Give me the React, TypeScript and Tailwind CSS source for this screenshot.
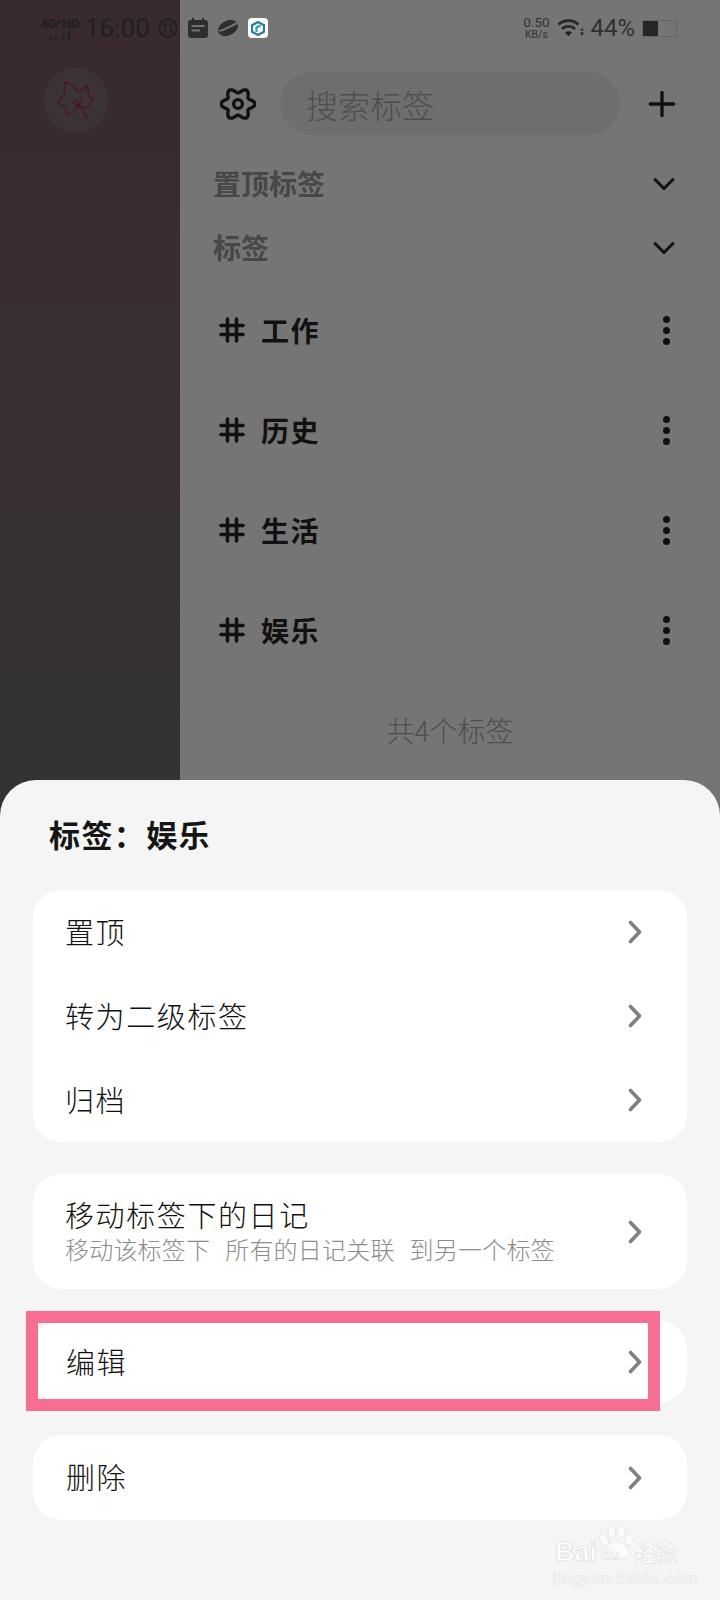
import React from 'react';
import { ChevronDown, Plus } from 'lucide-react';

const cjk = "font-['Noto_Sans_CJK_SC','Noto_Sans',sans-serif]";

const gearPath = () => {
  const pts: string[] = [];
  for (let i = 0; i < 120; i++) {
    const t = (i / 120) * Math.PI * 2;
    const r = 14.4 + 2.6 * Math.cos(6 * t);
    pts.push(`${(18 + r * Math.cos(t)).toFixed(2)} ${(18 + r * 0.94 * Math.sin(t)).toFixed(2)}`);
  }
  return `M${pts.join('L')}Z`;
};

const Gear = () => (
  <svg width="36" height="36" viewBox="0 0 36 36" fill="none" stroke="#111" strokeWidth="3.4" strokeLinejoin="round">
    <path d={gearPath()} />
    <circle cx="18" cy="18" r="4.4" />
  </svg>
);

const Leaf = () => (
  <svg width="64" height="64" viewBox="4 8 64 64" fill="none" stroke="#4a1626" strokeWidth="1.5" strokeLinejoin="round" strokeLinecap="round">
    <path d="M25 22 C30 23 35 27 38 32 C41 30 44 28 47 26 C48 30 49 34 49 37 L53 38 C52 42 48 47 45 48 C43 48 40 47 37 47 C35 51 32 54 28 55 C27 52 26 49 25 47 C23 46 20 44 18 42 C20 39 23 36 25 34 C24 30 24 26 25 22 Z" />
    <path d="M36 39 L47 58 M32 42 L39 46 M41 39 L39 45" />
  </svg>
);

const HashIcon = () => (
  <svg width="26" height="26" viewBox="0 0 26 26" stroke="#111" strokeWidth="3.6" strokeLinecap="round">
    <path d="M8.5 2V24M17.5 2V24M2 8.5H24M2 17.5H24" />
  </svg>
);

const Dots = () => (
  <div className="flex flex-col gap-[4px]">
    <div className="w-[7px] h-[7px] rounded-full bg-[#111]" />
    <div className="w-[7px] h-[7px] rounded-full bg-[#111]" />
    <div className="w-[7px] h-[7px] rounded-full bg-[#111]" />
  </div>
);

const Arrow = () => (
  <svg width="14" height="24" viewBox="0 0 14 24" fill="none" stroke="#808080" strokeWidth="3.6" strokeLinecap="round" strokeLinejoin="round">
    <path d="M2.5 2.5L11.5 12L2.5 21.5" />
  </svg>
);

const StatusBar = () => (
  <div className="absolute top-0 left-0 w-full h-[56px] flex items-center pl-[42px] pr-[43px] font-['Roboto',sans-serif] text-[#1f1f1f]">
    <div className="w-[36px] flex flex-col items-center">
      <span className="text-[13.5px] font-bold leading-[14px] whitespace-nowrap tracking-[-0.3px]">4G⁺HD</span>
      <div className="flex items-end gap-[2px] h-[10px]">
        <div className="w-[3px] h-[4px] bg-[#262626]" />
        <div className="w-[3px] h-[4px] ml-[1px] bg-[#262626]" />
        <div className="w-[4px] h-[7px] ml-[1px] bg-[#262626]" />
        <div className="w-[4px] h-[9px] bg-[#262626]" />
      </div>
    </div>
    <span className="ml-[7px] text-[26px] leading-none">16:00</span>
    <svg className="ml-[8px]" width="20" height="20" viewBox="0 0 20 20" fill="none" stroke="#1f1f1f" strokeWidth="1.7">
      <circle cx="10" cy="10" r="8.8" />
      <path d="M7.5 5V15M12.5 5V15M12.5 15L15 12M7.5 5L5 8" />
    </svg>
    <svg className="ml-[10px]" width="20" height="20" viewBox="0 0 20 20">
      <rect x="0" y="2" width="20" height="18" rx="3" fill="#2d2d2d" />
      <path d="M5 0V4M15 0V4" stroke="#2d2d2d" strokeWidth="2" />
      <path d="M3.5 8H16.5M3.5 12.5H12" stroke="#757575" strokeWidth="2" />
    </svg>
    <svg className="ml-[10px]" width="20" height="20" viewBox="0 0 20 20" fill="none">
      <ellipse cx="10" cy="10" rx="10.5" ry="7.4" transform="rotate(-28 10 10)" fill="#2d2d2d" />
      <path d="M1 13C7 12 13 8 19 5" stroke="#757575" strokeWidth="2.2" />
    </svg>
    <div className="ml-[10px] w-[20px] h-[20px] rounded-[4px] bg-white flex items-center justify-center">
      <svg width="14" height="15" viewBox="0 0 14 15" fill="none" stroke="#1f7f9e" strokeWidth="2.2">
        <path d="M7 1L13 4.2V10.8L7 14L1 10.8V4.2Z" />
        <path d="M5.5 11V6.5L9.5 4.5" stroke="#2f9fbf" />
      </svg>
    </div>
    <div className="ml-auto w-[28px] flex flex-col items-center text-[#333]">
      <span className="text-[13.5px] leading-[12px]">0.50</span>
      <span className="text-[10.5px] leading-[11px] mt-[1px]">KB/s</span>
    </div>
    <svg className="ml-[8px]" width="26" height="20" viewBox="0 0 26 20" fill="none" stroke="#262626" strokeWidth="2.8">
      <path d="M0.5 6.5C6 1.2 15 1.2 20.5 6.5" />
      <path d="M4 10.8C8 7.5 13 7.5 17 10.8" />
      <path d="M10.5 18.5L7 14.4C9 13 12 13 14 14.4Z" fill="#262626" stroke="none" />
      <path d="M22 12.5H26L24 10ZM22 14.5H26L24 18Z" fill="#262626" stroke="none" />
    </svg>
    <span className="ml-[6px] text-[24px] leading-none text-[#303030]">44%</span>
    <div className="ml-[7px] w-[35px] h-[17px] border border-[#656565] rounded-[2px] flex">
      <div className="w-[15px] h-full bg-[#262626]" />
    </div>
  </div>
);

const tags = ['工作', '历史', '生活', '娱乐'];

const TagRow = ({ name }: { name: string }) => (
  <div className="h-[100px] flex items-center pl-[39px] pr-[50px]">
    <HashIcon />
    <span className="ml-[16px] text-[28px] font-bold tracking-[1.5px] text-[#111] leading-none">{name}</span>
    <div className="ml-auto">
      <Dots />
    </div>
  </div>
);

const Section = ({ title }: { title: string }) => (
  <div className="h-[64px] flex items-center justify-between pl-[33px] pr-[38px]">
    <span className="text-[28px] font-bold text-[#474747] leading-none -mt-[2px]">{title}</span>
    <ChevronDown size={36} strokeWidth={2} color="#111" />
  </div>
);

const MenuRow = ({ label, className = '' }: { label: string; className?: string }) => (
  <div className={`flex items-center justify-between pl-[33px] pr-[45px] ${className}`}>
    <span className="text-[29px] tracking-[1.6px] font-light text-[#111] leading-none -mt-[2px]">{label}</span>
    <Arrow />
  </div>
);

const Watermark = () => (
  <div className="absolute left-[552px] top-[1520px] w-[130px] h-[66px] text-white">
    <svg className="absolute left-[44px] top-[2px]" width="40" height="42" viewBox="0 0 46 42" fill="#fbfbfb" stroke="#e6e6e6" strokeWidth="1">
      <ellipse cx="9" cy="17" rx="5" ry="7" transform="rotate(-25 9 17)" />
      <ellipse cx="18" cy="8" rx="4.6" ry="7" />
      <ellipse cx="29" cy="8" rx="4.6" ry="7" />
      <ellipse cx="38" cy="17" rx="5" ry="7" transform="rotate(25 38 17)" />
      <path d="M23 19C31 19 38 27 38 33C38 39 30 39 23 38C16 39 8 39 8 33C8 27 15 19 23 19Z" />
    </svg>
    <span className="absolute left-[3px] top-[19px] font-['Liberation_Sans',sans-serif] text-[27px] font-bold leading-none text-white [-webkit-text-stroke:1px_#e4e4e4]">Bai</span>
    <span className="absolute left-[49px] top-[27px] font-['Liberation_Sans',sans-serif] text-[15px] font-bold leading-none text-white [-webkit-text-stroke:0.6px_#dedede]">du</span>
    <span className={`absolute left-[83px] top-[22px] ${cjk} text-[21px] font-bold leading-none text-white [-webkit-text-stroke:0.6px_#e0e0e0]`}>经验</span>
    <span className="absolute left-[1px] top-[50px] font-['Liberation_Sans',sans-serif] text-[17px] leading-none tracking-[0.5px] text-[#f8f8f8] [-webkit-text-stroke:0.5px_#e6e6e6] whitespace-nowrap">jingyan.baidu.com</span>
  </div>
);

const App: React.FC = () => {
  return (
    <div className={`relative w-[720px] h-[1600px] overflow-hidden bg-[#f5f5f5] ${cjk}`}>
      <div className="h-[820px] flex">
        <div className="w-[180px] bg-linear-to-b from-[#38292f] via-[#392f33] to-[#333333] pt-[68px] pl-[44px]">
          <div className="w-[64px] h-[64px] rounded-full bg-[#3b3336] flex items-center justify-center">
            <Leaf />
          </div>
        </div>
        <div className="flex-1 bg-[#757575] pt-[72px]">
          <div className="flex items-center pl-[40px]">
            <Gear />
            <div className="ml-[24px] w-[340px] h-[63px] rounded-full bg-[#6e6e6e] flex items-center pl-[26px] text-[32px] text-[#4e4e4e] font-light">
              搜索标签
            </div>
            <div className="ml-[22px]">
              <Plus size={40} strokeWidth={2} color="#111" />
            </div>
          </div>
          <div className="mt-[17px]">
            <Section title="置顶标签" />
            <Section title="标签" />
          </div>
          {tags.map((t) => (
            <TagRow key={t} name={t} />
          ))}
          <div className="h-[100px] flex items-center justify-center text-[28px] font-light text-[#4e4e4e]">共4个标签</div>
        </div>
      </div>

      <StatusBar />

      <div className="relative -mt-[40px] h-[820px] bg-[#f5f5f5] rounded-t-[36px] pt-[33px]">
        <div className="h-[40px] pl-[49px] flex items-center text-[31px] font-bold text-[#151515] tracking-[1.4px] leading-none">标签：娱乐</div>
        <div className="mt-[37px] mx-[33px] flex flex-col gap-[32px]">
          <div className="h-[252px] bg-white rounded-[28px] flex flex-col">
            <MenuRow label="置顶" className="flex-1 -ml-[1px]" />
            <MenuRow label="转为二级标签" className="flex-1 -ml-[1px]" />
            <MenuRow label="归档" className="flex-1 -ml-[1px]" />
          </div>
          <div className="h-[115px] bg-white rounded-[28px] flex items-center justify-between pl-[32px] pr-[45px]">
            <div className="flex flex-col -mt-[2px]">
              <span className="text-[29px] tracking-[1.6px] font-light text-[#111] leading-[34px]">移动标签下的日记</span>
              <span className="mt-[3px] text-[24px] tracking-[0.2px] font-light text-[#8c8c8c] leading-[30px] whitespace-pre [word-spacing:2px]">移动该标签下  所有的日记关联  到另一个标签</span>
            </div>
            <Arrow />
          </div>
          <div className="relative h-[82px] bg-white rounded-[28px]">
            <MenuRow label="编辑" className="h-full" />
            <div className="absolute -left-[7px] -top-[10px] w-[634px] h-[100px] border-[12px] border-[#f76e93]" />
          </div>
          <div className="h-[85px] bg-white rounded-[28px]">
            <MenuRow label="删除" className="h-full" />
          </div>
        </div>
      </div>

      <Watermark />
    </div>
  );
};

export default App;
